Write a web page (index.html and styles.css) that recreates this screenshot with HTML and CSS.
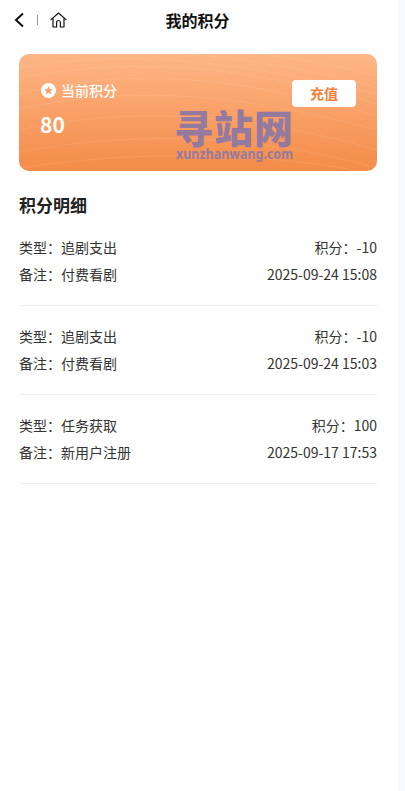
FILE: index.html
```html
<!DOCTYPE html>
<html lang="zh">
<head>
<meta charset="utf-8">
<title>我的积分</title>
<link rel="stylesheet" href="styles.css">
</head>
<body>
<div class="page">
  <header class="nav">
    <div class="nav-left">
      <svg class="back" width="12" height="16" viewBox="0 0 12 16"><path d="M10 1.5 3 8l7 6.5" fill="none" stroke="#111" stroke-width="2"/></svg>
      <span class="sep"></span>
      <svg class="home" width="17" height="16" viewBox="0 0 17 16"><path d="M1 7.6 8.5 1 16 7.6M3 6.5V15h3.6v-4.6a1.9 1.9 0 0 1 3.8 0V15H14V6.5" fill="none" stroke="#111" stroke-width="1.2" stroke-linejoin="round" stroke-linecap="round"/></svg>
    </div>
    <h1 class="nav-title">我的积分</h1>
  </header>
  <section class="card">
    <svg class="waves" viewBox="0 0 358 117" preserveAspectRatio="none">
      <g fill="none" stroke="#fff" stroke-opacity=".1" stroke-width="1">
        <path d="M0 14C80 0 170 -4 358 40"/>
        <path d="M0 24C90 8 190 2 358 50"/>
        <path d="M0 40C90 18 190 14 358 62"/>
        <path d="M0 55C100 34 200 34 358 76"/>
        <path d="M0 76C100 54 220 56 358 96"/>
        <path d="M0 98C110 78 230 78 358 114"/>
        <path d="M0 114C120 96 240 98 340 117"/>
        <path d="M170 0C240 6 310 20 358 34"/>
        <path d="M240 0C290 6 330 14 358 22"/>
      </g>
    </svg>
    <div class="card-main">
      <div class="card-info">
        <div class="card-label">
          <svg width="15" height="15" viewBox="0 0 15 15"><circle cx="7.5" cy="7.5" r="7.5" fill="#fff"/><path d="M7.5 3.2l1.3 2.8 3 .3-2.3 2 .7 3-2.7-1.6-2.7 1.6.7-3-2.3-2 3-.3z" fill="#f5a46e"/></svg>
          <span>当前积分</span>
        </div>
        <div class="card-value">80</div>
      </div>
      <button class="recharge">充值</button>
    </div>
    <div class="mark">
      <div class="mark-cn">寻站网</div>
      <div class="mark-en">xunzhanwang.com</div>
    </div>
  </section>
  <h2 class="section-title">积分明细</h2>
  <ul class="list">
    <li class="item">
      <div class="row"><span>类型：追剧支出</span><span>积分：-10</span></div>
      <div class="row"><span>备注：付费看剧</span><span>2025-09-24 15:08</span></div>
    </li>
    <li class="item">
      <div class="row"><span>类型：追剧支出</span><span>积分：-10</span></div>
      <div class="row"><span>备注：付费看剧</span><span>2025-09-24 15:03</span></div>
    </li>
    <li class="item">
      <div class="row"><span>类型：任务获取</span><span>积分：100</span></div>
      <div class="row"><span>备注：新用户注册</span><span>2025-09-17 17:53</span></div>
    </li>
  </ul>
</div>
</body>
</html>
```
FILE: styles.css
```css
* { box-sizing: border-box; }
html, body { margin: 0; padding: 0; height: 100%; overflow: hidden; }
body {
  background: #f8f9ff;
  font-family: "Noto Sans CJK SC", "Noto Sans", sans-serif;
  color: #333;
}
.page { width: 398px; height: 791px; background: #fff; }
.nav {
  position: relative;
  height: 40px;
  padding-right: 3px;
  display: flex;
  align-items: center;
  justify-content: center;
}
.nav-left {
  position: absolute;
  left: 13px;
  top: 12px;
  display: flex;
  align-items: center;
  height: 16px;
}
.back { margin-right: 12px; }
.sep { width: 1px; height: 10px; background: #999; margin-right: 12px; }
.nav-title { margin: 0; font-size: 16px; line-height: 22px; font-weight: 700; color: #111; }
.card {
  position: relative;
  margin: 14px 21px 0 19px;
  height: 117px;
  border-radius: 10px;
  overflow: hidden;
  background: linear-gradient(180deg, #feb686 0%, #f48b48 100%);
}
.waves { position: absolute; inset: 0; width: 100%; height: 100%; }
.card-main {
  position: relative;
  display: flex;
  justify-content: space-between;
  padding: 26px 21px 0 22px;
}
.card-label {
  display: flex;
  align-items: center;
  gap: 5px;
  height: 20px;
  font-size: 14px;
  font-weight: 500;
  color: #fff;
}
.card-value {
  margin-top: 9px;
  margin-left: -1px;
  font-size: 21px;
  line-height: 30px;
  font-weight: 700;
  color: #fff;
}
.recharge {
  width: 64px;
  height: 27px;
  border: 0;
  padding: 0;
  border-radius: 4px;
  background: #fff;
  color: #f0803c;
  font: 700 14px/27px "Noto Sans CJK SC", sans-serif;
}
.mark {
  position: absolute;
  left: 155px;
  top: 52px;
  width: 118px;
  color: #957a9f;
}
.mark-cn { font-size: 39px; line-height: 40px; font-weight: 900; letter-spacing: 1px; white-space: nowrap; }
.mark-en {
  margin-left: 2px;
  font: 700 14.5px/15px "Noto Sans", sans-serif;
  white-space: nowrap;
  transform: scaleX(.86);
  transform-origin: left center;
}
.section-title {
  margin: 22px 21px 0 19px;
  font-size: 17px;
  line-height: 24px;
  font-weight: 700;
  color: #222;
}
.list { list-style: none; margin: 0 21px 0 19px; padding: 0; }
.item {
  height: 89px;
  padding-top: 17px;
  border-bottom: 1px solid #eeeeee;
}
.row {
  display: flex;
  justify-content: space-between;
  height: 27px;
  font-size: 14px;
  line-height: 27px;
  color: #333;
}
```
